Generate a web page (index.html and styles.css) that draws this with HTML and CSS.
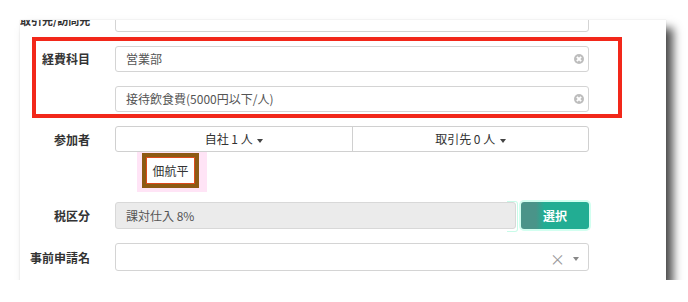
FILE: index.html
```html
<!DOCTYPE html>
<html>
<head>
    <title>経費入力</title>
    <link rel="stylesheet" href="styles.css">
</head>
<body>
    <div class="card">
        <div class="form">
            <div class="row row-cut">
                <label class="label">取引先/訪問先</label>
                <div class="field"></div>
            </div>

            <div class="row">
                <label class="label label-top">経費科目</label>
                <div class="stack">
                    <div class="field">営業部<span class="clear"></span></div>
                    <div class="field">接待飲食費(5000円以下/人)<span class="clear"></span></div>
                </div>
            </div>

            <div class="row">
                <label class="label">参加者</label>
                <div class="btn-group">
                    <div class="btn-part">自社 1 人 <span class="caret"></span></div>
                    <div class="btn-part">取引先 0 人 <span class="caret"></span></div>
                </div>
            </div>

            <div class="row row-member">
                <span></span>
                <div>
                    <span class="member-hl"><span class="member">佃航平</span></span>
                </div>
            </div>

            <div class="row">
                <label class="label">税区分</label>
                <div class="tax">
                    <div class="field field-off">課対仕入 8%<span class="glow"></span></div>
                    <button class="pick">選択</button>
                </div>
            </div>

            <div class="row">
                <label class="label">事前申請名</label>
                <div class="field field-select">
                    <span class="select-icons"><span class="times">×</span><span class="caret caret-grey"></span></span>
                </div>
            </div>
        </div>

        <!-- annotation box drawn over the form -->
        <div class="mark-red"></div>
    </div>
</body>
</html>
```

FILE: styles.css
```css
body {
    margin: 0;
    background-color: #fff;
    font-family: "Noto Sans CJK JP", "Noto Sans", sans-serif;
    font-size: 12px;
    color: #333;
}

.card {
    position: relative;
    margin: 20px 0 0 20px;
    width: 646px;
    height: 260px;
    background-color: #fff;
    overflow: hidden;
    box-shadow: 0 0 1px rgba(0, 0, 0, 0.15), 7px 8px 9px rgba(0, 0, 0, 0.7);
}

.form {
    display: flex;
    flex-direction: column;
    gap: 14px;
    margin-top: -14px;
}

.row {
    display: grid;
    grid-template-columns: 70px 474px;
    column-gap: 25px;
    align-items: center;
}

.label {
    text-align: right;
    font-weight: bold;
    color: #333;
    white-space: nowrap;
}

.row-cut .label {
    font-size: 11px;
    margin-top: 2px;
}

.label-top {
    align-self: start;
    line-height: 26px;
}

.stack {
    display: flex;
    flex-direction: column;
    gap: 14px;
}

.field {
    position: relative;
    box-sizing: border-box;
    height: 26px;
    line-height: 24px;
    padding: 0 10px;
    border: 1px solid #d4d4d4;
    border-radius: 3px;
    background-color: #fff;
    color: #555;
}

.clear {
    position: absolute;
    right: 4px;
    top: 7px;
    width: 10px;
    height: 10px;
    border-radius: 50%;
    background-color: #bdbdbd;
}

.clear::before,
.clear::after {
    content: "";
    position: absolute;
    left: 4px;
    top: 2px;
    width: 2px;
    height: 6px;
    background-color: #fff;
    transform: rotate(45deg);
}

.clear::after {
    transform: rotate(-45deg);
}

.btn-group {
    display: grid;
    grid-template-columns: 1fr 1fr;
    height: 26px;
    box-sizing: border-box;
    border: 1px solid #d0d0d0;
    border-radius: 3px;
}

.btn-part {
    line-height: 24px;
    text-align: center;
    color: #333;
}

.btn-part + .btn-part {
    border-left: 1px solid #d0d0d0;
}

.caret {
    display: inline-block;
    width: 0;
    height: 0;
    margin-left: 2px;
    vertical-align: middle;
    border-left: 3px solid transparent;
    border-right: 3px solid transparent;
    border-top: 4px solid #444;
}

.caret-grey {
    border-top-color: #888;
}

.row-member {
    margin-top: -14px;
    height: 36px;
    align-items: start;
}

.member-hl {
    display: inline-block;
    margin-left: 22px;
    padding: 1px 8px 4px 5px;
    background-color: #ffe4f6;
}

.member {
    display: block;
    box-sizing: border-box;
    width: 57px;
    height: 35px;
    line-height: 27px;
    text-align: center;
    border: 4px solid #8d5a14;
    box-shadow: inset 0 0 0 1px #dd4a1c;
    background-color: #fff;
    color: #333;
}

.tax {
    display: flex;
    gap: 5px;
}

.field-off {
    flex: 1;
    height: 27px;
    line-height: 25px;
    background-color: #ebebeb;
    border-color: #d8d8d8;
}

.glow {
    position: absolute;
    right: -3px;
    top: -2px;
    width: 10px;
    height: 29px;
    border: 1px solid #c8fbe8;
    border-left: none;
    border-radius: 0 3px 3px 0;
}

.pick {
    width: 68px;
    height: 27px;
    border: none;
    border-radius: 3px;
    background: linear-gradient(to right, #4a9489 0, #4a9489 22%, #22ad93 34%, #22ad93 100%);
    color: #fff;
    font-family: inherit;
    font-size: 12px;
    font-weight: bold;
    box-shadow: 0 0 0 2px #d2fff0;
}

.field-select {
    height: 28px;
}

.select-icons {
    position: absolute;
    right: 9px;
    top: 0;
    line-height: 26px;
    color: #999;
}

.times {
    font-size: 15px;
    margin-right: 6px;
    vertical-align: middle;
}

.mark-red {
    position: absolute;
    left: 12px;
    top: 17px;
    width: 590px;
    height: 81px;
    box-sizing: border-box;
    border: 4px solid #f2281a;
}
```
